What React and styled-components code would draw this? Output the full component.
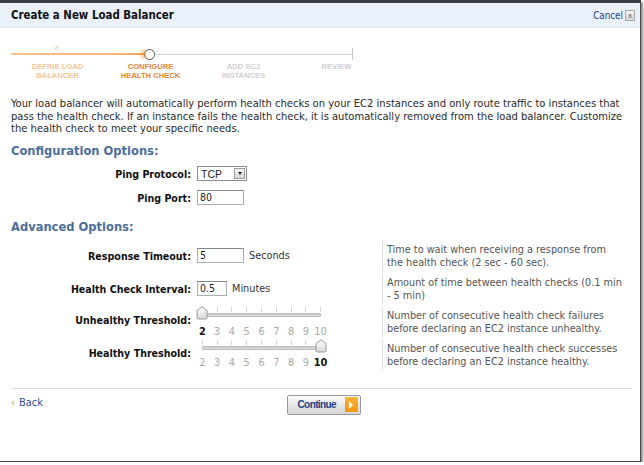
import React from 'react';
import styled, { createGlobalStyle } from 'styled-components';

const GlobalStyle = createGlobalStyle`
  html, body {
    margin: 0;
    padding: 0;
    background: #fff;
  }
  body {
    font-family: "DejaVu Sans Condensed", "DejaVu Sans", Verdana, sans-serif;
    font-size: 11px;
    color: #222;
  }
`;

const Frame = styled.div`
  width: 640px;
  height: 458px;
  background: #fff;
  border-top: 3px solid #3b3f45;
  border-right: 1px solid #4a4a4a;
  border-bottom: 1px solid #4a4a4a;
  box-shadow: 2px 2px 2px rgba(0, 0, 0, 0.45);
  display: flex;
  flex-direction: column;
`;

const Header = styled.div`
  height: 24px;
  background: #eaf1fb;
  border-bottom: 1px solid #dfe7f1;
  display: flex;
  align-items: center;
  justify-content: space-between;
  padding: 0 5px 0 11px;
`;

const Title = styled.h1`
  margin: 0;
  font-size: 11.4px;
  font-weight: bold;
  color: #111;
`;

const CancelBox = styled.div`
  display: flex;
  align-items: center;
  gap: 2px;
`;

const CancelLink = styled.a`
  color: #26408c;
  font-size: 9.8px;
  text-decoration: none;
`;

const CloseBtn = styled.span`
  width: 8px;
  height: 9px;
  border: 1px solid #a9a9a9;
  background: linear-gradient(#f2f2f2, #d8d8d8);
  font-size: 8px;
  line-height: 9px;
  text-align: center;
  color: #555;
  font-family: "Liberation Sans", sans-serif;
`;

const Body = styled.div`
  padding: 0 8px 0 11px;
  display: flex;
  flex-direction: column;
`;

const Stepper = styled.div`
  margin-top: 18px;
  width: 372px;
`;

const Track = styled.div`
  display: flex;
  align-items: center;
  height: 16px;
  width: 342px;
`;

const DoneLine = styled.div`
  position: relative;
  width: 133px;
  height: 2px;
  background: linear-gradient(to right, #f6c08c 0%, #f6b67a 85%, #f39a3c 100%);
`;

const Check = styled.span`
  position: absolute;
  left: 43px;
  top: -9px;
  color: #f09a48;
  font-size: 8px;
  font-weight: bold;
  line-height: 8px;
`;

const Glow = styled.span`
  position: absolute;
  right: -2px;
  top: -4px;
  width: 10px;
  height: 10px;
  background: radial-gradient(circle at right, rgba(243, 150, 50, 0.75), rgba(243, 150, 50, 0) 70%);
`;

const Current = styled.div`
  width: 9px;
  height: 9px;
  border-radius: 50%;
  border: 1.5px solid #5a5a5a;
  background: #fff;
`;

const TodoLine = styled.div`
  flex: 1;
  height: 1px;
  background: #d4d4d4;
`;

const EndTick = styled.div`
  width: 1px;
  height: 12px;
  background: #c8c8c8;
`;

const StepLabels = styled.div`
  display: grid;
  grid-template-columns: repeat(4, 93px);
`;

const StepLabel = styled.div`
  text-align: center;
  font-family: "Liberation Sans", Arial, sans-serif;
  font-weight: bold;
  font-size: 7.6px;
  line-height: 9px;
  color: ${(p) => (p.$state === 'done' ? '#f6c594' : p.$state === 'current' ? '#e8852a' : '#cfcfcf')};
`;

const Intro = styled.p`
  margin: 18px 0 0;
  font-size: 11.1px;
  line-height: 12.5px;
  color: #2a2a2a;
  white-space: nowrap;
`;

const Heading = styled.h2`
  margin: ${(p) => p.$top}px 0 0;
  font-size: 12.8px;
  line-height: 18px;
  font-weight: bold;
  color: #4d6e9b;
`;

const FormGrid = styled.div`
  display: grid;
  grid-template-columns: 180px 179px 1fr;
  column-gap: 6px;
  row-gap: ${(p) => p.$gap}px;
  margin-top: ${(p) => p.$top}px;
  align-items: center;
`;

const Label = styled.label`
  text-align: right;
  font-weight: bold;
  font-size: 10.6px;
  color: #111;
  margin-top: ${(p) => (p.$lift ? -3 : 0)}px;
`;

const Control = styled.div`
  display: flex;
  align-items: ${(p) => (p.$top ? 'flex-start' : 'center')};
  gap: 5px;
  height: ${(p) => p.$h}px;
`;

const TextInput = styled.div`
  width: ${(p) => p.$w}px;
  height: 15px;
  box-sizing: border-box;
  border: 1px solid #a7adb5;
  border-top-color: #7f8690;
  background: #fff;
  font-size: 10.5px;
  line-height: 13px;
  padding-left: 2px;
`;

const Unit = styled.span`
  color: #333;
  font-size: 10.8px;
`;

const Select = styled.div`
  width: 50px;
  height: 15px;
  border: 1px solid #8d8d8d;
  box-sizing: border-box;
  display: flex;
  align-items: center;
  justify-content: space-between;
  font-family: "Liberation Sans", Arial, sans-serif;
  font-size: 10.5px;
  padding-left: 3px;
  background: #fff;
`;

const SelectArrow = styled.span`
  width: 11px;
  height: 11px;
  margin-right: 1px;
  border: 1px solid #9a9a9a;
  box-sizing: border-box;
  background: linear-gradient(#f3f3f3, #d9d9d9);
  display: flex;
  align-items: center;
  justify-content: center;
  &::after {
    content: '';
    border-left: 2.5px solid transparent;
    border-right: 2.5px solid transparent;
    border-top: 3px solid #222;
  }
`;

const Desc = styled.div`
  border-left: 1px solid #dcdcdc;
  padding-left: 4px;
  height: 30px;
  display: flex;
  align-items: center;
  font-size: 10.8px;
  line-height: 13px;
  color: #555;
  white-space: nowrap;
`;

const Slider = styled.div`
  position: relative;
  width: 133px;
  margin-left: -2px;
  display: flex;
  flex-direction: column;
`;

const Ticks = styled.div`
  display: grid;
  grid-template-columns: repeat(9, 1fr);
  height: 5px;
`;

const Tick = styled.span`
  justify-self: center;
  width: 1px;
  height: 5px;
  background: #d2d2d2;
`;

const Rail = styled.div`
  height: 4px;
  margin: 1px 7px 0;
  background: linear-gradient(#c9c9c9, #dedede);
  border: 1px solid #bdbdbd;
  box-sizing: border-box;
  border-radius: 1px;
`;

const Numbers = styled.div`
  display: grid;
  grid-template-columns: repeat(9, 1fr);
  margin-top: ${(p) => p.$gap}px;
`;

const Num = styled.span`
  text-align: center;
  font-family: "DejaVu Sans", Verdana, sans-serif;
  font-size: 9.8px;
  line-height: 12px;
  font-weight: ${(p) => (p.$on ? 'bold' : 'normal')};
  color: ${(p) => (p.$on ? '#111' : '#a9a9a9')};
`;

const Thumb = styled.svg`
  position: absolute;
  top: -1px;
`;

const Rule = styled.div`
  margin-top: 18px;
  height: 1px;
  background: #dedede;
`;

const Footer = styled.div`
  display: grid;
  grid-template-columns: 1fr auto 1fr;
  align-items: start;
  padding-top: 6px;
`;

const BackLink = styled.a`
  color: #2f4f93;
  font-size: 11px;
  text-decoration: none;
  margin-top: 1px;
  span {
    color: #e8862a;
    margin-right: 4px;
  }
`;

const ContinueButton = styled.button`
  width: 74px;
  height: 20px;
  margin-left: 4px;
  border: 1px solid #999;
  border-radius: 2px;
  background: linear-gradient(#fbfbfb, #e6e6e6 50%, #d6d6d6);
  display: flex;
  align-items: center;
  justify-content: space-between;
  padding: 0 2px 0 10px;
  font-family: "Liberation Sans", Arial, sans-serif;
  font-size: 10px;
  letter-spacing: -0.6px;
  font-weight: bold;
  color: #1f3f80;
`;

const ArrowBox = styled.span`
  width: 13px;
  height: 15px;
  background: linear-gradient(#fbb43a, #f39414);
  display: flex;
  align-items: center;
  justify-content: center;
  &::after {
    content: '';
    border-top: 4px solid transparent;
    border-bottom: 4px solid transparent;
    border-left: 4px solid #fff;
  }
`;

const values = [2, 3, 4, 5, 6, 7, 8, 9, 10];

const ThumbShape = ({ left }) => (
  <Thumb style={{ left }} width="12" height="14" viewBox="0 0 12 14">
    <defs>
      <linearGradient id="tg" x1="0" y1="0" x2="0" y2="1">
        <stop offset="0" stopColor="#ffffff" />
        <stop offset="1" stopColor="#d6d6d6" />
      </linearGradient>
    </defs>
    <path d="M1 4.5 L6 0.8 L11 4.5 L11 11.5 Q11 13 9.5 13 L2.5 13 Q1 13 1 11.5 Z" fill="url(#tg)" stroke="#999" strokeWidth="1" />
  </Thumb>
);

const RangeSlider = ({ value, numGap }) => {
  const idx = values.indexOf(value);
  const left = 7 + idx * ((133 - 14) / 8) - 6;
  return (
    <Slider>
      <Ticks>
        {values.map((v) => (
          <Tick key={v} />
        ))}
      </Ticks>
      <Rail />
      <ThumbShape left={left} />
      <Numbers $gap={numGap}>
        {values.map((v) => (
          <Num key={v} $on={v === value}>
            {v}
          </Num>
        ))}
      </Numbers>
    </Slider>
  );
};

const steps = [
  { label: ['DEFINE LOAD', 'BALANCER'], state: 'done' },
  { label: ['CONFIGURE', 'HEALTH CHECK'], state: 'current' },
  { label: ['ADD EC2', 'INSTANCES'], state: 'todo' },
  { label: ['REVIEW'], state: 'todo' },
];

export default function App() {
  return (
    <>
      <GlobalStyle />
      <Frame>
        <Header>
          <Title>Create a New Load Balancer</Title>
          <CancelBox>
            <CancelLink href="#">Cancel</CancelLink>
            <CloseBtn>x</CloseBtn>
          </CancelBox>
        </Header>
        <Body>
          <Stepper>
            <Track>
              <DoneLine>
                <Check>✓</Check>
                <Glow />
              </DoneLine>
              <Current />
              <TodoLine />
              <EndTick />
            </Track>
            <StepLabels>
              {steps.map((s) => (
                <StepLabel key={s.label[0]} $state={s.state}>
                  {s.label.map((l) => (
                    <div key={l}>{l}</div>
                  ))}
                </StepLabel>
              ))}
            </StepLabels>
          </Stepper>

          <Intro>
            Your load balancer will automatically perform health checks on your EC2 instances and only route traffic to
            instances that
            <br />
            pass the health check. If an instance fails the health check, it is automatically removed from the load
            balancer. Customize
            <br />
            the health check to meet your specific needs.
          </Intro>

          <Heading $top={6}>Configuration Options:</Heading>
          <FormGrid $gap={4} $top={4}>
            <Label>Ping Protocol:</Label>
            <Control $h={20}>
              <Select>
                TCP
                <SelectArrow />
              </Select>
            </Control>
            <span />
            <Label>Ping Port:</Label>
            <Control $h={20}>
              <TextInput $w={47}>80</TextInput>
            </Control>
            <span />
          </FormGrid>

          <Heading $top={10}>Advanced Options:</Heading>
          <FormGrid $gap={3} $top={5}>
            <Label>Response Timeout:</Label>
            <Control $h={30}>
              <TextInput $w={47}>5</TextInput>
              <Unit>Seconds</Unit>
            </Control>
            <Desc>
              Time to wait when receiving a response from
              <br />
              the health check (2 sec - 60 sec).
            </Desc>

            <Label>Health Check Interval:</Label>
            <Control $h={30}>
              <TextInput $w={30}>0.5</TextInput>
              <Unit>Minutes</Unit>
            </Control>
            <Desc>
              Amount of time between health checks (0.1 min
              <br />- 5 min)
            </Desc>

            <Label $lift>Unhealthy Threshold:</Label>
            <Control $h={30} $top>
              <RangeSlider value={2} numGap={9} />
            </Control>
            <Desc>
              Number of consecutive health check failures
              <br />
              before declaring an EC2 instance unhealthy.
            </Desc>

            <Label $lift>Healthy Threshold:</Label>
            <Control $h={30} $top>
              <RangeSlider value={10} numGap={7} />
            </Control>
            <Desc>
              Number of consecutive health check successes
              <br />
              before declaring an EC2 instance healthy.
            </Desc>
          </FormGrid>

          <Rule />
          <Footer>
            <BackLink href="#">
              <span>‹</span>Back
            </BackLink>
            <ContinueButton>
              Continue
              <ArrowBox />
            </ContinueButton>
            <span />
          </Footer>
        </Body>
      </Frame>
    </>
  );
}
